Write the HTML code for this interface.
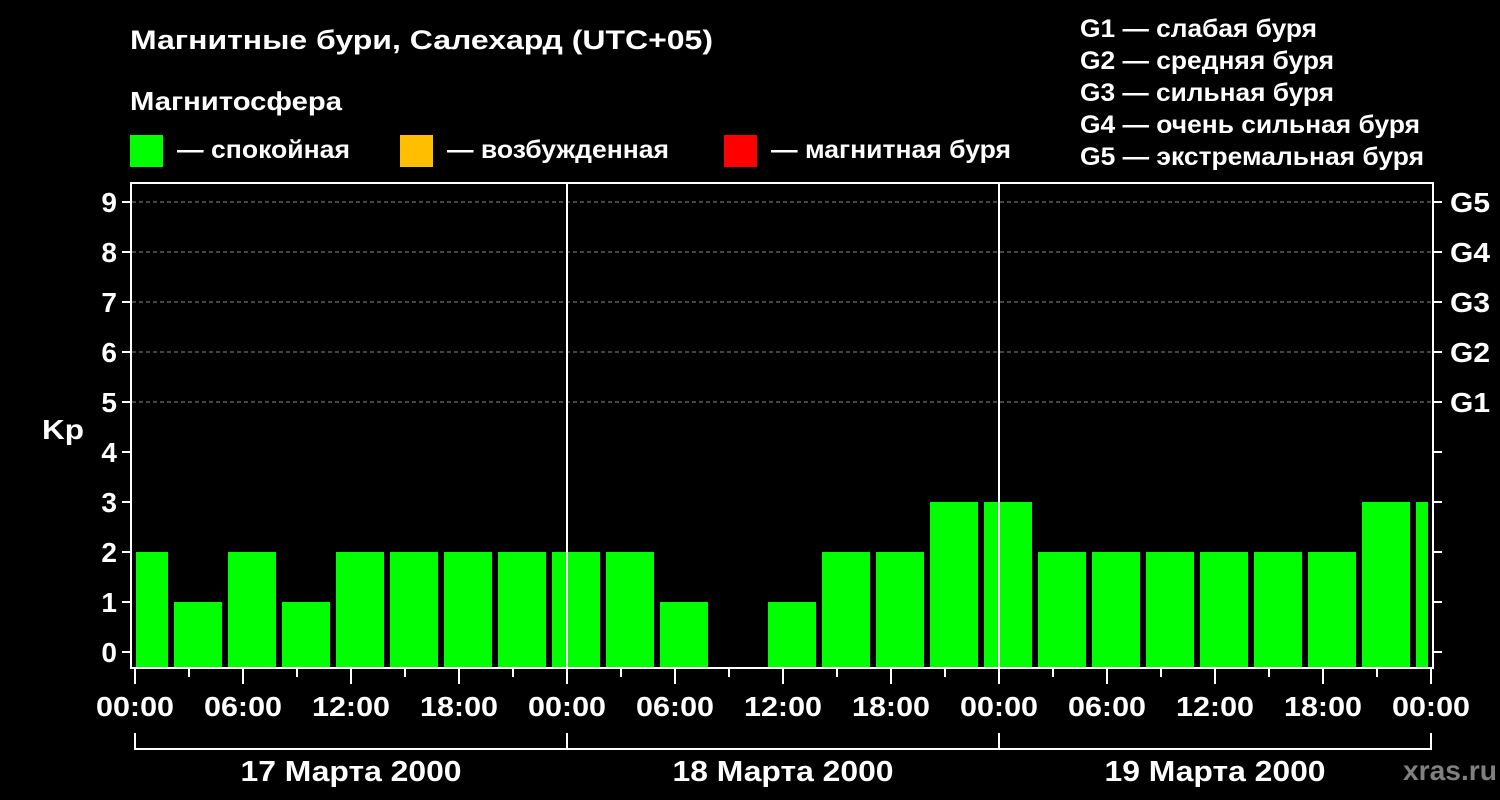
<!DOCTYPE html>
<html><head><meta charset="utf-8"><style>html,body{margin:0;padding:0;background:#000}svg{display:block}</style></head><body>
<svg width="1500" height="800" xmlns="http://www.w3.org/2000/svg" font-family="Liberation Sans, Arial, sans-serif" font-weight="bold" fill="#fff">
<rect width="1500" height="800" fill="#000"/>
<text x="130" y="49" font-size="27" textLength="583" lengthAdjust="spacingAndGlyphs">Магнитные бури, Салехард (UTC+05)</text>
<text x="130" y="110" font-size="26" textLength="212" lengthAdjust="spacingAndGlyphs">Магнитосфера</text>
<rect x="130" y="135" width="33" height="32" fill="#00ff00"/>
<text x="177" y="158" font-size="25" textLength="173" lengthAdjust="spacingAndGlyphs">— спокойная</text>
<rect x="400" y="135" width="33" height="32" fill="#ffbf00"/>
<text x="447" y="158" font-size="25" textLength="222" lengthAdjust="spacingAndGlyphs">— возбужденная</text>
<rect x="724" y="135" width="33" height="32" fill="#ff0000"/>
<text x="771" y="158" font-size="25" textLength="240" lengthAdjust="spacingAndGlyphs">— магнитная буря</text>
<g font-size="25">
<text x="1080" y="37" textLength="237" lengthAdjust="spacingAndGlyphs">G1 — слабая буря</text>
<text x="1080" y="69" textLength="254" lengthAdjust="spacingAndGlyphs">G2 — средняя буря</text>
<text x="1080" y="101" textLength="254" lengthAdjust="spacingAndGlyphs">G3 — сильная буря</text>
<text x="1080" y="133" textLength="340" lengthAdjust="spacingAndGlyphs">G4 — очень сильная буря</text>
<text x="1080" y="165" textLength="344" lengthAdjust="spacingAndGlyphs">G5 — экстремальная буря</text>
</g>
<g stroke="#888" stroke-width="1" stroke-dasharray="4,3">
<line x1="132" y1="202" x2="1432" y2="202"/><line x1="132" y1="252" x2="1432" y2="252"/><line x1="132" y1="302" x2="1432" y2="302"/><line x1="132" y1="352" x2="1432" y2="352"/><line x1="132" y1="402" x2="1432" y2="402"/>
</g>
<g fill="#00ff00">
<rect x="136" y="552" width="32" height="116"/>
<rect x="174" y="602" width="48" height="66"/>
<rect x="228" y="552" width="48" height="116"/>
<rect x="282" y="602" width="48" height="66"/>
<rect x="336" y="552" width="48" height="116"/>
<rect x="390" y="552" width="48" height="116"/>
<rect x="444" y="552" width="48" height="116"/>
<rect x="498" y="552" width="48" height="116"/>
<rect x="552" y="552" width="48" height="116"/>
<rect x="606" y="552" width="48" height="116"/>
<rect x="660" y="602" width="48" height="66"/>
<rect x="768" y="602" width="48" height="66"/>
<rect x="822" y="552" width="48" height="116"/>
<rect x="876" y="552" width="48" height="116"/>
<rect x="930" y="502" width="48" height="166"/>
<rect x="984" y="502" width="48" height="166"/>
<rect x="1038" y="552" width="48" height="116"/>
<rect x="1092" y="552" width="48" height="116"/>
<rect x="1146" y="552" width="48" height="116"/>
<rect x="1200" y="552" width="48" height="116"/>
<rect x="1254" y="552" width="48" height="116"/>
<rect x="1308" y="552" width="48" height="116"/>
<rect x="1362" y="502" width="48" height="166"/>
<rect x="1416" y="502" width="12" height="166"/>
</g>
<g stroke="#fff" stroke-width="2" fill="none">
<rect x="131" y="183" width="1302" height="485"/>
<line x1="567" y1="183" x2="567" y2="668"/>
<line x1="999" y1="183" x2="999" y2="668"/>
<path d="M122 202h9M122 252h9M122 302h9M122 352h9M122 402h9M122 452h9M122 502h9M122 552h9M122 602h9M122 652h9"/>
<path d="M1433 202h9M1433 252h9M1433 302h9M1433 352h9M1433 402h9M1433 452h9M1433 502h9M1433 552h9M1433 602h9M1433 652h9"/>
<path d="M135 668v16M189 668v9M243 668v16M297 668v9M351 668v16M405 668v9M459 668v16M513 668v9M567 668v16M621 668v9M675 668v16M729 668v9M783 668v16M837 668v9M891 668v16M945 668v9M999 668v16M1053 668v9M1107 668v16M1161 668v9M1215 668v16M1269 668v9M1323 668v16M1377 668v9M1431 668v16"/>
<path d="M135 733v16h1296v-16M567 733v16M999 733v16"/>
</g>
<g font-size="28" text-anchor="end">
<text x="117" y="212">9</text><text x="117" y="262">8</text><text x="117" y="312">7</text><text x="117" y="362">6</text><text x="117" y="412">5</text><text x="117" y="462">4</text><text x="117" y="512">3</text><text x="117" y="562">2</text><text x="117" y="612">1</text><text x="117" y="662">0</text>
</g>
<text x="42" y="439" font-size="28" textLength="42" lengthAdjust="spacingAndGlyphs">Kp</text>
<g font-size="28">
<text x="1450" y="212" textLength="40" lengthAdjust="spacingAndGlyphs">G5</text><text x="1450" y="262" textLength="40" lengthAdjust="spacingAndGlyphs">G4</text><text x="1450" y="312" textLength="40" lengthAdjust="spacingAndGlyphs">G3</text><text x="1450" y="362" textLength="40" lengthAdjust="spacingAndGlyphs">G2</text><text x="1450" y="412" textLength="40" lengthAdjust="spacingAndGlyphs">G1</text>
</g>
<g font-size="28" text-anchor="middle">
<text x="135" y="716" textLength="78" lengthAdjust="spacingAndGlyphs">00:00</text><text x="243" y="716" textLength="78" lengthAdjust="spacingAndGlyphs">06:00</text><text x="351" y="716" textLength="78" lengthAdjust="spacingAndGlyphs">12:00</text><text x="459" y="716" textLength="78" lengthAdjust="spacingAndGlyphs">18:00</text><text x="567" y="716" textLength="78" lengthAdjust="spacingAndGlyphs">00:00</text><text x="675" y="716" textLength="78" lengthAdjust="spacingAndGlyphs">06:00</text><text x="783" y="716" textLength="78" lengthAdjust="spacingAndGlyphs">12:00</text><text x="891" y="716" textLength="78" lengthAdjust="spacingAndGlyphs">18:00</text><text x="999" y="716" textLength="78" lengthAdjust="spacingAndGlyphs">00:00</text><text x="1107" y="716" textLength="78" lengthAdjust="spacingAndGlyphs">06:00</text><text x="1215" y="716" textLength="78" lengthAdjust="spacingAndGlyphs">12:00</text><text x="1323" y="716" textLength="78" lengthAdjust="spacingAndGlyphs">18:00</text><text x="1431" y="716" textLength="78" lengthAdjust="spacingAndGlyphs">00:00</text>
<text x="351" y="781" font-size="29" textLength="221" lengthAdjust="spacingAndGlyphs">17 Марта 2000</text><text x="783" y="781" font-size="29" textLength="221" lengthAdjust="spacingAndGlyphs">18 Марта 2000</text><text x="1215" y="781" font-size="29" textLength="221" lengthAdjust="spacingAndGlyphs">19 Марта 2000</text>
</g>
<text x="1403" y="780" font-size="28" fill="#808080" textLength="94" lengthAdjust="spacingAndGlyphs">xras.ru</text>
</svg>
</body></html>
